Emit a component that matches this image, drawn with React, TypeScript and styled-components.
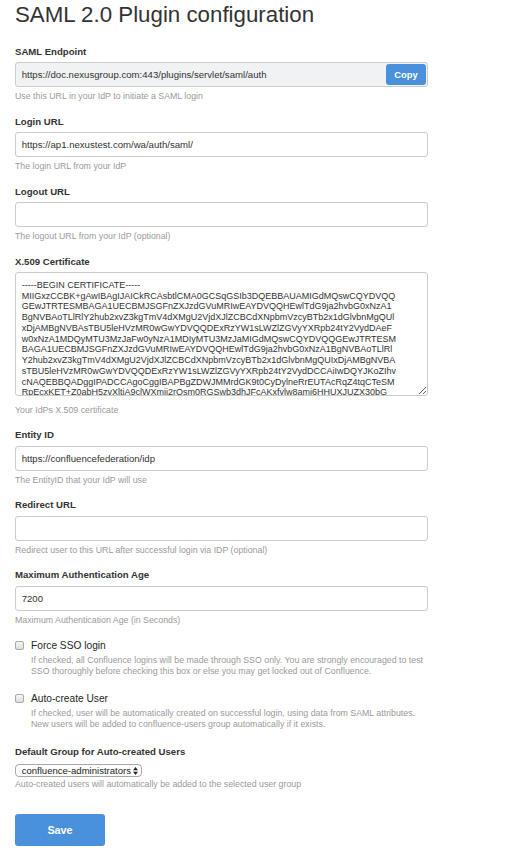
import React from "react";
import styled, { createGlobalStyle } from "styled-components";

const GlobalStyle = createGlobalStyle`
  html, body { margin: 0; padding: 0; background: #ffffff; }
  body { font-family: "Liberation Sans", Arial, Helvetica, sans-serif; color: #333333; }
  * { box-sizing: border-box; }
`;

const Page = styled.div`
  padding: 2.3px 0 0 15px;
  width: 428px;
`;

const Title = styled.h1`
  margin: 0 0 17.4px;
  font-size: 22.3px;
  line-height: 26px;
  font-weight: normal;
  color: #333333;
`;

const Field = styled.div`
  margin-bottom: 13.7px;
`;

const Label = styled.label<{ $gap?: number }>`
  display: block;
  font-size: 9.6px;
  line-height: 12px;
  font-weight: bold;
  color: #333333;
  margin-bottom: ${(p) => (p.$gap ?? 4.3)}px;
`;

const TextInput = styled.input`
  display: block;
  width: 100%;
  height: 25px;
  margin: 0;
  padding: 0 5.7px;
  border: 1px solid #cccccc;
  border-radius: 3px;
  background: #ffffff;
  font-family: "Liberation Sans", Arial, sans-serif;
  font-size: 9.6px;
  color: #333333;
  outline: none;
`;

const InputGroup = styled.div`
  display: flex;
  align-items: center;
  width: 100%;
  height: 25px;
  padding: 0 1px 0 0;
  border: 1px solid #cccccc;
  border-radius: 3px;
  background: #f1f2f4;
`;

const GroupInput = styled.input`
  flex: 1;
  min-width: 0;
  height: 100%;
  border: none;
  background: transparent;
  padding: 0 5.7px;
  font-family: "Liberation Sans", Arial, sans-serif;
  font-size: 9.6px;
  color: #333333;
  outline: none;
`;

const BlueButton = styled.button<{ $w: number; $h: number; $size: number }>`
  width: ${(p) => p.$w}px;
  height: ${(p) => p.$h}px;
  padding: 0;
  border: none;
  border-radius: 3px;
  background: #4a91db;
  color: #ffffff;
  font-family: "Liberation Sans", Arial, sans-serif;
  font-weight: bold;
  font-size: ${(p) => p.$size}px;
  cursor: pointer;
`;

const CertArea = styled.textarea`
  display: block;
  width: 100%;
  height: 124px;
  margin: 0;
  padding: 7px 5.7px;
  border: 1px solid #cccccc;
  border-radius: 3px;
  font-family: "Liberation Sans", Arial, sans-serif;
  font-size: 9px;
  line-height: 10.74px;
  color: #333333;
  white-space: pre;
  overflow: hidden;
  resize: vertical;
  outline: none;
`;

const Help = styled.div<{ $gap?: number }>`
  margin-top: ${(p) => (p.$gap ?? 4)}px;
  font-size: 8.8px;
  line-height: 11px;
  color: #9a9a9a;
`;

const CheckOption = styled.div`
  margin-bottom: 15.1px;
`;

const CheckRow = styled.label`
  display: flex;
  align-items: center;
  gap: 7px;
  height: 11.6px;
  font-size: 10.2px;
  color: #262626;
`;

const CheckBox = styled.input`
  appearance: none;
  -webkit-appearance: none;
  margin: 0;
  width: 9px;
  height: 9px;
  border: 1px solid #a9a9a9;
  border-radius: 2px;
  background: linear-gradient(#f6f6f6, #dcdcdc);
`;

const CheckDesc = styled.div`
  margin-top: 4px;
  padding-left: 16px;
  font-size: 8.8px;
  line-height: 11.3px;
  color: #9a9a9a;
  white-space: pre;
`;

const SelectWrap = styled.div`
  position: relative;
  width: 127px;
  height: 13px;
`;

const Select = styled.select`
  appearance: none;
  -webkit-appearance: none;
  display: block;
  width: 100%;
  height: 13px;
  margin: 0;
  padding: 0 0 0 5.7px;
  border: 1px solid #a8a8a8;
  border-radius: 4px;
  background: #ffffff;
  font-family: "Liberation Sans", Arial, sans-serif;
  font-size: 9.55px;
  line-height: 11px;
  color: #222222;
  outline: none;
`;

const SelectArrows = styled.svg`
  position: absolute;
  right: 4.5px;
  top: 2.5px;
  pointer-events: none;
`;

const SaveRow = styled.div`
  margin-top: 24.3px;
`;

const cert = [
  "-----BEGIN CERTIFICATE-----",
  "MIIGxzCCBK+gAwIBAgIJAICkRCAsbtlCMA0GCSqGSIb3DQEBBAUAMIGdMQswCQYDVQQ",
  "GEwJTRTESMBAGA1UECBMJSGFnZXJzdGVuMRIwEAYDVQQHEwlTdG9ja2hvbG0xNzA1",
  "BgNVBAoTLlRlY2hub2xvZ3kgTmV4dXMgU2VjdXJlZCBCdXNpbmVzcyBTb2x1dGlvbnMgQUl",
  "xDjAMBgNVBAsTBU5leHVzMR0wGwYDVQQDExRzYW1sLWZlZGVyYXRpb24tY2VydDAeF",
  "w0xNzA1MDQyMTU3MzJaFw0yNzA1MDIyMTU3MzJaMIGdMQswCQYDVQQGEwJTRTESM",
  "BAGA1UECBMJSGFnZXJzdGVuMRIwEAYDVQQHEwlTdG9ja2hvbG0xNzA1BgNVBAoTLlRl",
  "Y2hub2xvZ3kgTmV4dXMgU2VjdXJlZCBCdXNpbmVzcyBTb2x1dGlvbnMgQUIxDjAMBgNVBA",
  "sTBU5leHVzMR0wGwYDVQQDExRzYW1sLWZlZGVyYXRpb24tY2VydDCCAiIwDQYJKoZIhv",
  "cNAQEBBQADggIPADCCAgoCggIBAPBgZDWJMMrdGK9t0CyDylneRrEUTAcRqZ4tqCTeSM",
  "RpEcxKET+Z0abH5zvXltiA9clWXmij2rQsm0RGSwb3dhJFcAKxfvlw8amj6HHUXJUZX30bG",
  "-----END CERTIFICATE-----",
].join("\n");

export default function App() {
  return (
    <>
      <GlobalStyle />
      <Page>
        <Title>SAML 2.0 Plugin configuration</Title>

        <Field>
          <Label>SAML Endpoint</Label>
          <InputGroup>
            <GroupInput readOnly value="https://doc.nexusgroup.com:443/plugins/servlet/saml/auth" />
            <BlueButton $w={40} $h={21} $size={9.4}>Copy</BlueButton>
          </InputGroup>
          <Help>Use this URL in your IdP to initiate a SAML login</Help>
        </Field>

        <Field>
          <Label>Login URL</Label>
          <TextInput defaultValue="https://ap1.nexustest.com/wa/auth/saml/" />
          <Help>The login URL from your IdP</Help>
        </Field>

        <Field>
          <Label>Logout URL</Label>
          <TextInput defaultValue="" />
          <Help>The logout URL from your IdP (optional)</Help>
        </Field>

        <Field>
          <Label>X.509 Certificate</Label>
          <CertArea wrap="off" defaultValue={cert} />
          <Help $gap={8.7}>Your IdPs X.509 certificate</Help>
        </Field>

        <Field>
          <Label>Entity ID</Label>
          <TextInput defaultValue="https://confluencefederation/idp" />
          <Help>The EntityID that your IdP will use</Help>
        </Field>

        <Field>
          <Label>Redirect URL</Label>
          <TextInput defaultValue="" />
          <Help>Redirect user to this URL after successful login via IDP (optional)</Help>
        </Field>

        <Field>
          <Label>Maximum Authentication Age</Label>
          <TextInput defaultValue="7200" />
          <Help>Maximum Authentication Age (in Seconds)</Help>
        </Field>

        <CheckOption>
          <CheckRow>
            <CheckBox type="checkbox" />
            Force SSO login
          </CheckRow>
          <CheckDesc>
            {"If checked, all Confluence logins will be made through SSO only. You are strongly encouraged to test\nSSO thoroughly before checking this box or else you may get locked out of Confluence."}
          </CheckDesc>
        </CheckOption>

        <CheckOption>
          <CheckRow>
            <CheckBox type="checkbox" />
            Auto-create User
          </CheckRow>
          <CheckDesc>
            {"If checked, user will be automatically created on successful login, using data from SAML attributes.\nNew users will be added to confluence-users group automatically if it exists."}
          </CheckDesc>
        </CheckOption>

        <div>
          <Label $gap={6.2}>Default Group for Auto-created Users</Label>
          <SelectWrap>
            <Select defaultValue="confluence-administrators">
              <option value="confluence-administrators">confluence-administrators</option>
              <option value="confluence-users">confluence-users</option>
            </Select>
            <SelectArrows width="5" height="8" viewBox="0 0 5 8">
              <path d="M2.5 0 L5 3.2 L0 3.2 Z" fill="#222" />
              <path d="M0 4.8 L5 4.8 L2.5 8 Z" fill="#222" />
            </SelectArrows>
          </SelectWrap>
          <Help $gap={2}>Auto-created users will automatically be added to the selected user group</Help>
        </div>

        <SaveRow>
          <BlueButton $w={90} $h={32} $size={10.8}>Save</BlueButton>
        </SaveRow>
      </Page>
    </>
  );
}
